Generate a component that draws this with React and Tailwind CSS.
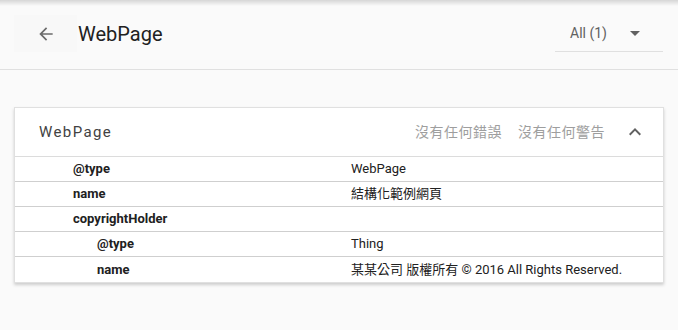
import React from 'react';

const rows = [
  { label: '@type', value: 'WebPage', depth: 0 },
  { label: 'name', value: '結構化範例網頁', depth: 0 },
  { label: 'copyrightHolder', value: '', depth: 0 },
  { label: '@type', value: 'Thing', depth: 1 },
  { label: 'name', value: '某某公司 版權所有 © 2016 All Rights Reserved.', depth: 1 },
];

const font = { fontFamily: 'Roboto, "Noto Sans CJK TC", sans-serif' };

const App = () => {
  return (
    <div className="w-[678px] h-[330px] bg-[#fafafa] relative overflow-hidden" style={font}>
      {/* top shadow */}
      <div className="absolute top-0 left-0 right-0 h-[6px] bg-gradient-to-b from-[#d6d6d6] to-transparent"></div>

      {/* header */}
      <div className="h-[70px] border-b border-[#e0e0e0] flex items-center">
        <div className="ml-[14px] w-[63px] h-[37px] bg-[#f8f8f8] flex items-center justify-center mt-[-2px]">
          <svg width="20" height="20" viewBox="0 0 24 24" className="ml-[1px]">
            <path d="M20 11H7.83l5.59-5.59L12 4l-8 8 8 8 1.41-1.41L7.83 13H20v-2z" fill="#6b6b6b" />
          </svg>
        </div>
        <h1 className="ml-[1px] text-[20px] text-[#212121] mt-[-2px]">WebPage</h1>
        <div className="ml-auto mr-[15px] w-[108px] h-[36px] border-b border-[#e0e0e0] flex items-center mt-[-1px]">
          <span className="ml-[15px] text-[14px] text-[#616161]">All (1)</span>
          <svg width="10" height="5" viewBox="0 0 10 5" className="ml-auto mr-[23px]">
            <path d="M0 0h10L5 5z" fill="#616161" />
          </svg>
        </div>
      </div>

      {/* card */}
      <div className="mt-[37px] mx-[14px] bg-white border border-[#e0e0e0] shadow-[0_2px_3px_rgba(0,0,0,0.18)]">
        <div className="h-[49px] flex items-center border-b border-[#dcdcdc]">
          <span className="ml-[24px] text-[15px] tracking-[1.4px] text-[#424242]">WebPage</span>
          <span className="ml-auto text-[14px] tracking-[0.5px] text-[#9e9e9e]">沒有任何錯誤</span>
          <span className="ml-[16px] text-[14px] tracking-[0.5px] text-[#9e9e9e]">沒有任何警告</span>
          <svg width="12" height="8" viewBox="0 0 12 8" className="ml-[24px] mr-[22px]">
            <path d="M1.4 7.4L6 2.8l4.6 4.6L12 6 6 0 0 6z" fill="#616161" />
          </svg>
        </div>
        {rows.map((row, i) => (
          <div
            key={i}
            className={`h-[25px] flex items-center ${i < rows.length - 1 ? 'border-b border-[#cfcfcf]' : ''}`}
          >
            <div className={`w-[336px] shrink-0 text-[13px] font-bold text-[#212121] ${row.depth ? 'pl-[82px]' : 'pl-[58px]'}`}>
              {row.label}
            </div>
            <div className="text-[13px] text-[#212121]">{row.value}</div>
          </div>
        ))}
      </div>
    </div>
  );
};

export default App;
